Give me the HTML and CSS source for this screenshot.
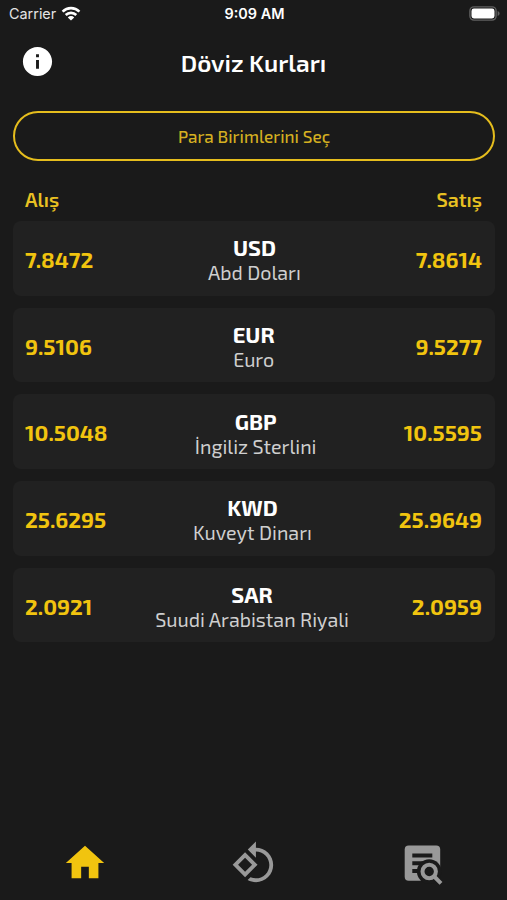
FILE: index.html
```html
<!DOCTYPE html>
<html lang="tr">
<head>
  <meta charset="UTF-8">
  <meta name="viewport" content="width=device-width, initial-scale=1.0">
  <title>Döviz Kurları</title>
  <link rel="stylesheet" href="styles.css">
</head>
<body>
  <div class="app">
    <div class="status-bar">
      <div class="carrier">
        <span>Carrier</span>
        <svg width="20" height="15" viewBox="0 0 20 15" fill="none" stroke="#fff" stroke-width="2.6">
          <path d="M1.6 5.6a12 12 0 0 1 16.8 0"/>
          <path d="M4.7 9a7.6 7.6 0 0 1 10.6 0"/>
          <path d="M10 14.6L6.8 11.4a4.6 4.6 0 0 1 6.4 0z" fill="#fff" stroke="none"/>
        </svg>
      </div>
      <div class="clock">9:09 AM</div>
      <div class="battery">
        <svg width="31" height="15" viewBox="0 0 31 15">
          <rect x="0.9" y="0.9" width="26.2" height="13.2" rx="4" fill="none" stroke="#606060" stroke-width="1.4"/>
          <rect x="2.5" y="2.5" width="23" height="10" rx="2.4" fill="#fff"/>
          <path d="M28.6 5v5c1.2-.5 2-1.4 2-2.5s-.8-2-2-2.5z" fill="#606060"/>
        </svg>
      </div>
    </div>

    <header class="header">
      <svg class="info" width="35" height="35" viewBox="0 0 24 24" fill="#fff">
        <path d="M12 2C6.48 2 2 6.48 2 12s4.48 10 10 10 10-4.48 10-10S17.52 2 12 2zm1 15h-2v-6h2v6zm0-8h-2V7h2v2z"/>
      </svg>
      <h1>Döviz Kurları</h1>
    </header>

    <main class="content">
      <button class="select-btn">Para Birimlerini Seç</button>

      <div class="labels">
        <span>Alış</span>
        <span>Satış</span>
      </div>

      <div class="rates">
        <div class="rate">
          <span class="price">7.8472</span>
          <div class="currency">
            <strong>USD</strong>
            <span>Abd Doları</span>
          </div>
          <span class="price">7.8614</span>
        </div>
        <div class="rate">
          <span class="price">9.5106</span>
          <div class="currency">
            <strong>EUR</strong>
            <span>Euro</span>
          </div>
          <span class="price">9.5277</span>
        </div>
        <div class="rate">
          <span class="price">10.5048</span>
          <div class="currency">
            <strong>GBP</strong>
            <span>İngiliz Sterlini</span>
          </div>
          <span class="price">10.5595</span>
        </div>
        <div class="rate">
          <span class="price">25.6295</span>
          <div class="currency">
            <strong>KWD</strong>
            <span>Kuveyt Dinarı</span>
          </div>
          <span class="price">25.9649</span>
        </div>
        <div class="rate">
          <span class="price">2.0921</span>
          <div class="currency">
            <strong>SAR</strong>
            <span>Suudi Arabistan Riyali</span>
          </div>
          <span class="price">2.0959</span>
        </div>
      </div>
    </main>

    <nav class="tab-bar">
      <a class="tab active">
        <svg width="46" height="46" viewBox="0 0 24 24" fill="currentColor">
          <path d="M10 20v-6h4v6h5v-8h3L12 3 2 12h3v8z"/>
        </svg>
      </a>
      <a class="tab">
        <svg width="46" height="46" viewBox="0 0 24 24" fill="currentColor">
          <path d="M7.34 6.41L.86 12.9l6.49 6.48 6.49-6.48-6.5-6.49zM3.69 12.9l3.66-3.66L11 12.9l-3.66 3.66-3.65-3.66zm15.67-6.26C17.61 4.88 15.3 4 13 4V.76L8.76 5 13 9.24V6c1.79 0 3.58.68 4.95 2.05 2.73 2.73 2.73 7.17 0 9.9C16.58 19.32 14.79 20 13 20c-.97 0-1.94-.21-2.84-.61l-1.49 1.49C10.02 21.62 11.51 22 13 22c2.3 0 4.61-.88 6.36-2.64 3.52-3.51 3.52-9.21 0-12.72z"/>
        </svg>
      </a>
      <a class="tab">
        <svg width="46" height="46" viewBox="0 0 46 46">
          <rect x="4.7" y="5.5" width="35.5" height="35.3" rx="4" fill="currentColor"/>
          <path d="M12.3 15.5h20M12.3 23.2h12M12.3 30.9h8" stroke="#1a1a1a" stroke-width="4"/>
          <path d="M29.2 43.8V32H46v11.8z" fill="#1a1a1a"/>
          <circle cx="29.2" cy="31.5" r="12.3" fill="#1a1a1a"/>
          <circle cx="29.2" cy="31.5" r="6.7" fill="none" stroke="currentColor" stroke-width="4"/>
          <path d="M33.7 36l7.3 7.3" stroke="currentColor" stroke-width="4"/>
        </svg>
      </a>
    </nav>
  </div>
</body>
</html>
```

FILE: styles.css
```css
* {
  box-sizing: border-box;
}

body {
  margin: 0;
  background: #1a1a1a;
  color: #fff;
  font-family: 'Exo 2', Roboto, sans-serif;
}

.app {
  height: 900px;
  display: flex;
  flex-direction: column;
  overflow: hidden;
}

.status-bar {
  height: 28px;
  padding: 0 7px 2px 9px;
  display: grid;
  grid-template-columns: 1fr auto 1fr;
  align-items: center;
  font-family: Inter, sans-serif;
  font-size: 14.4px;
}

.carrier {
  display: flex;
  align-items: center;
  gap: 5px;
  color: #e4e4e4;
}

.clock {
  font-weight: 600;
}

.battery {
  display: flex;
  justify-content: flex-end;
}

.header {
  height: 70px;
  padding: 0 19.5px 3px;
  display: grid;
  grid-template-columns: 35px 1fr 35px;
  align-items: center;
}

h1 {
  margin: 1px 0 0;
  text-align: center;
  font-size: 24.4px;
  font-weight: 600;
}

.content {
  flex: 1;
  padding: 13px 12px 0 13px;
}

.select-btn {
  display: block;
  width: 100%;
  height: 50px;
  padding: 0;
  background: transparent;
  border: 2px solid #e5bd1d;
  border-radius: 25px;
  color: #d5b021;
  font-family: inherit;
  font-size: 17.1px;
  font-weight: 500;
}

.labels {
  height: 60px;
  padding: 15px 13px 0 12px;
  display: flex;
  justify-content: space-between;
  align-items: center;
  color: #e8c022;
  font-size: 19.6px;
  font-weight: 600;
}

.rates {
  display: flex;
  flex-direction: column;
  gap: 12px;
}

.rate {
  height: 74.7px;
  padding: 0 13px 0 12px;
  display: flex;
  justify-content: space-between;
  align-items: center;
  background: #212121;
  border-radius: 8px;
}

.price {
  padding-top: 1px;
  color: #f1c40f;
  font-size: 22px;
  font-weight: 700;
}

.currency {
  display: flex;
  flex-direction: column;
  align-items: center;
  padding-top: 4px;
}

.currency strong {
  font-size: 22px;
  line-height: 25px;
  font-weight: 700;
}

.currency span {
  color: #cfcfcf;
  font-size: 19.7px;
  line-height: 25px;
}

.tab-bar {
  height: 68px;
  padding-bottom: 6px;
  display: flex;
  align-items: center;
}

.tab {
  flex: 1;
  display: flex;
  justify-content: center;
  color: #999;
}

.tab.active {
  color: #f1c40f;
}
```
